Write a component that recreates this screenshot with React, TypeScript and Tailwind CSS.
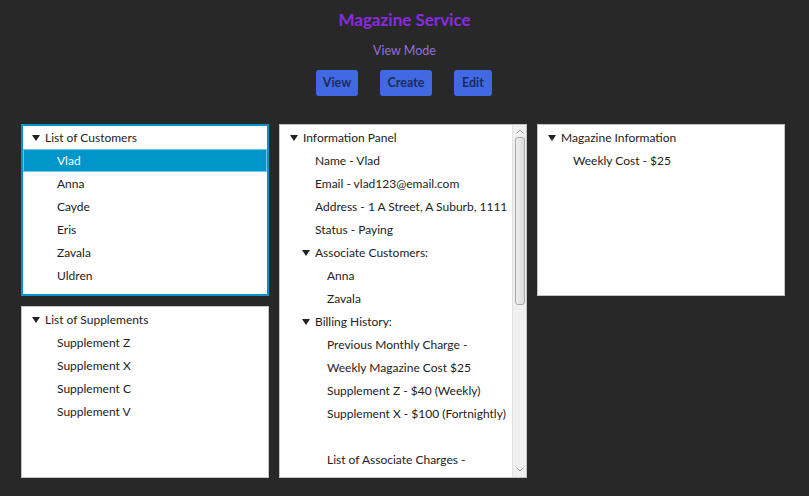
import React from 'react';

const font = { fontFamily: '"Segoe UI", Lato, "Noto Sans", sans-serif' };

function Arrow() {
  return (
    <svg width="8" height="6" viewBox="0 0 8 6" className="shrink-0">
      <path d="M0 0 H8 L4 6 Z" fill="#222" />
    </svg>
  );
}

type Row = { text: string; level: number; branch?: boolean; selected?: boolean };

function TreeRow({ row, shift = 0 }: { row: Row; shift?: number }) {
  const pad = 10 + row.level * 12 - shift;
  return (
    <div
      className={
        'h-[23px] flex items-center shrink-0 pt-[1px] ' +
        (row.selected ? 'bg-[#0096c9] text-white ring-1 ring-inset ring-[#6cc3e6]' : 'text-[#222]')
      }
      style={{ paddingLeft: row.branch ? pad : pad + 13 }}
    >
      {row.branch && (
        <span className="w-[13px] flex items-center">
          <Arrow />
        </span>
      )}
      <span className="whitespace-nowrap">{row.text}</span>
    </div>
  );
}

function Tree({ rows, focused, className }: { rows: Row[]; focused?: boolean; className?: string }) {
  return (
    <div
      className={
        'bg-white overflow-hidden flex flex-col ' +
        (focused ? 'border-2 border-[#0096c9] ' : 'border border-[#c4c4c4] pt-[1px] ') +
        (className ?? '')
      }
    >
      {rows.map((r, i) => (
        <TreeRow key={i} row={r} shift={focused ? 1 : 0} />
      ))}
    </div>
  );
}

const customers: Row[] = [
  { text: 'List of Customers', level: 0, branch: true },
  { text: 'Vlad', level: 1, selected: true },
  { text: 'Anna', level: 1 },
  { text: 'Cayde', level: 1 },
  { text: 'Eris', level: 1 },
  { text: 'Zavala', level: 1 },
  { text: 'Uldren', level: 1 },
];

const supplements: Row[] = [
  { text: 'List of Supplements', level: 0, branch: true },
  { text: 'Supplement Z', level: 1 },
  { text: 'Supplement X', level: 1 },
  { text: 'Supplement C', level: 1 },
  { text: 'Supplement V', level: 1 },
];

const info: Row[] = [
  { text: 'Information Panel', level: 0, branch: true },
  { text: 'Name - Vlad', level: 1 },
  { text: 'Email - vlad123@email.com', level: 1 },
  { text: 'Address - 1 A Street, A Suburb, 1111', level: 1 },
  { text: 'Status - Paying', level: 1 },
  { text: 'Associate Customers:', level: 1, branch: true },
  { text: 'Anna', level: 2 },
  { text: 'Zavala', level: 2 },
  { text: 'Billing History:', level: 1, branch: true },
  { text: 'Previous Monthly Charge -', level: 2 },
  { text: 'Weekly Magazine Cost $25', level: 2 },
  { text: 'Supplement Z - $40 (Weekly)', level: 2 },
  { text: 'Supplement X - $100 (Fortnightly)', level: 2 },
  { text: '', level: 2 },
  { text: 'List of Associate Charges -', level: 2 },
];

const magazine: Row[] = [
  { text: 'Magazine Information', level: 0, branch: true },
  { text: 'Weekly Cost - $25', level: 1 },
];

function ScrollBar() {
  return (
    <div className="w-[14px] bg-[#f0f0f0] border-l border-[#e2e2e2] flex flex-col items-center shrink-0">
      <div className="h-[12px] flex items-center justify-center">
        <svg width="8" height="5" viewBox="0 0 8 5">
          <path d="M0.5 4.5 L4 1 L7.5 4.5" fill="none" stroke="#9a9a9a" strokeWidth="1" />
        </svg>
      </div>
      <div className="w-[10px] h-[168px] rounded-[3px] border border-[#a9a9a9] bg-gradient-to-r from-[#eeeeee] to-[#dcdcdc]" />
      <div className="flex-1" />
      <div className="h-[12px] flex items-center justify-center mb-[2px]">
        <svg width="8" height="5" viewBox="0 0 8 5">
          <path d="M0.5 0.5 L4 4 L7.5 0.5" fill="none" stroke="#9a9a9a" strokeWidth="1" />
        </svg>
      </div>
    </div>
  );
}

export default function App() {
  const btn =
    'h-[26px] rounded-[3px] bg-[#4169e1] text-[#1b2b5e] font-bold text-[12.5px] flex items-center justify-center';
  return (
    <div className="w-[809px] h-[496px] bg-[#282828] flex flex-col text-[12px]" style={font}>
      <div className="h-[40px] flex items-center justify-center text-[17px] font-bold text-[#8a2be2]">
        Magazine Service
      </div>
      <div className="h-[22px] flex items-center justify-center text-[12.5px] text-[#9370db]">View Mode</div>
      <div className="mt-[8px] flex justify-center gap-[22px] pr-[1px]">
        <div className={btn + ' w-[42px]'}>View</div>
        <div className={btn + ' w-[52px]'}>Create</div>
        <div className={btn + ' w-[38px]'}>Edit</div>
      </div>
      <div className="mt-[28px] ml-[21px] flex gap-[10px]">
        <div className="w-[248px] flex flex-col gap-[10px]">
          <Tree rows={customers} focused className="h-[172px]" />
          <Tree rows={supplements} className="h-[172px]" />
        </div>
        <div className="w-[248px] h-[354px] bg-white border border-[#c4c4c4] flex overflow-hidden">
          <div className="flex-1 flex flex-col overflow-hidden pt-[1px]">
            {info.map((r, i) => (
              <TreeRow key={i} row={r} />
            ))}
          </div>
          <ScrollBar />
        </div>
        <Tree rows={magazine} className="w-[248px] h-[172px]" />
      </div>
    </div>
  );
}
